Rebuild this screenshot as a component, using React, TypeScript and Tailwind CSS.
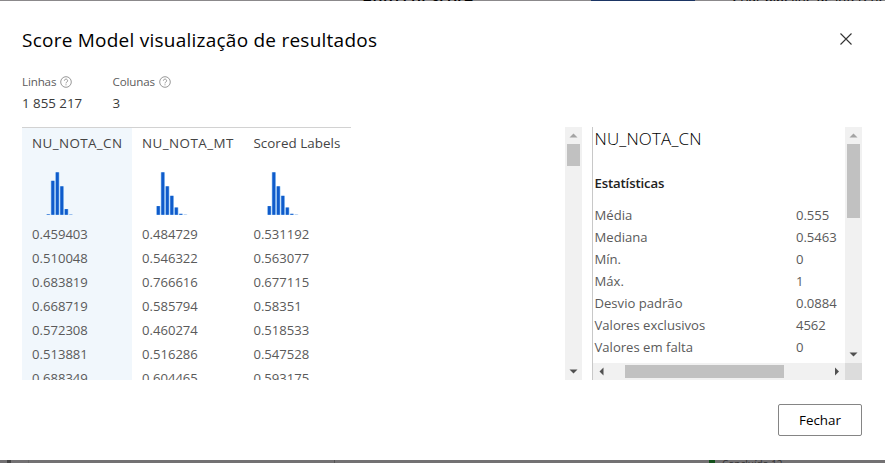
import React from "react";

type Bar = { x: number; h: number };

const columns: { name: string; width: string; tracking: string; active: boolean; bars: Bar[]; values: string[] }[] = [
  {
    name: "NU_NOTA_CN",
    width: "w-[110px]",
    tracking: "tracking-[0.4px]",
    active: true,
    bars: [
      { x: 14.2, h: 0.6 },
      { x: 18.7, h: 34 },
      { x: 23.2, h: 42.5 },
      { x: 27.7, h: 28.5 },
      { x: 32.2, h: 5.7 },
      { x: 36.7, h: 0.3 },
    ],
    values: ["0.459403", "0.510048", "0.683819", "0.668719", "0.572308", "0.513881", "0.688349"],
  },
  {
    name: "NU_NOTA_MT",
    width: "w-[111.4px]",
    tracking: "tracking-[0.45px]",
    active: false,
    bars: [
      { x: 14.2, h: 8.7 },
      { x: 18.7, h: 42.5 },
      { x: 23.2, h: 28.5 },
      { x: 27.7, h: 19 },
      { x: 32.2, h: 7.3 },
      { x: 36.7, h: 1 },
      { x: 41.2, h: 0.2 },
    ],
    values: ["0.484729", "0.546322", "0.766616", "0.585794", "0.460274", "0.516286", "0.604465"],
  },
  {
    name: "Scored Labels",
    width: "w-[107.6px]",
    tracking: "tracking-[0.05px]",
    active: false,
    bars: [
      { x: 14.2, h: 8.7 },
      { x: 18.7, h: 42.5 },
      { x: 23.2, h: 28.5 },
      { x: 27.7, h: 19 },
      { x: 32.2, h: 7.3 },
      { x: 36.7, h: 1 },
      { x: 41.2, h: 0.2 },
    ],
    values: ["0.531192", "0.563077", "0.677115", "0.58351", "0.518533", "0.547528", "0.593175"],
  },
];

const stats = [
  ["Média", "0.555"],
  ["Mediana", "0.5463"],
  ["Mín.", "0"],
  ["Máx.", "1"],
  ["Desvio padrão", "0.0884"],
  ["Valores exclusivos", "4562"],
  ["Valores em falta", "0"],
];

function Histogram({ bars }: { bars: Bar[] }) {
  return (
    <svg width="60" height="44" viewBox="0 0 60 44" className="block">
      {bars.map((b) => (
        <g key={b.x}>
          <rect x={b.x} y={43.8 - b.h} width="4.3" height={b.h} fill="#a9d3f7" />
          <rect x={b.x + 0.6} y={43.8 - b.h} width="3" height={b.h} fill="#0f5bcb" />
        </g>
      ))}
    </svg>
  );
}

function Help() {
  return (
    <svg width="12" height="12" viewBox="0 0 12 12" fill="none" stroke="#858585" strokeWidth="0.85">
      <circle cx="6" cy="6" r="5.3" />
      <path d="M4.4 4.7a1.6 1.6 0 1 1 2.5 1.3C6.2 6.4 6 6.7 6 7.4M6 8.3v1" />
    </svg>
  );
}

function Arrow({ dir, light }: { dir: "up" | "down" | "left" | "right"; light?: boolean }) {
  const paths = {
    up: "M4.5 10.5h8L8.5 6.5z",
    down: "M4.5 6.5h8L8.5 10.5z",
    left: "M10.5 4.5v8L6.5 8.5z",
    right: "M7 4.5v8L11 8.5z",
  };
  return (
    <svg width="17" height="17" viewBox="0 0 17 17" className="shrink-0">
      <path d={paths[dir]} fill={light ? "#a3a3a3" : "#505050"} />
    </svg>
  );
}

function Fact({ label, value, width }: { label: string; value: string; width: string }) {
  return (
    <div className={width}>
      <div className="flex h-4 items-center gap-1 text-[11.6px] tracking-[-0.15px] text-[#5c5c5c]">
        <span>{label}</span>
        <Help />
      </div>
      <div className="mt-[3px] h-5 text-[13.3px] leading-5 text-[#3a3a3a]">{value}</div>
    </div>
  );
}

export default function App() {
  return (
    <div className="flex h-[463px] w-[885px] flex-col overflow-hidden bg-white font-['Open_Sans','Noto_Sans',sans-serif]">
      <div className="flex h-px shrink-0 items-end overflow-hidden bg-[#8b898b] text-[13px] leading-none text-black">
        <span className="ml-[362px] h-[10px] w-[229px] shrink-0 text-[16px] font-semibold">Auto cut score</span>
        <span className="h-px w-[104px] shrink-0 bg-[#1b3564]" />
        <span className="ml-[37px] h-[10px] shrink-0 whitespace-nowrap">Criar pipeline de inferência</span>
      </div>

      <main className="flex h-[459px] shrink-0 flex-col pl-[22px] pr-[23px]">
        <header className="flex h-[73px] items-start justify-between pt-[25px]">
          <h1 className="text-[19px] font-medium leading-[28px] tracking-[0.24px] text-black">Score Model visualização de resultados</h1>
          <svg width="12" height="12" viewBox="0 0 12 12" className="mr-[10px] mt-[7px]" stroke="#333" strokeWidth="1.1">
            <path d="M.5.5l11 11M11.5.5l-11 11" />
          </svg>
        </header>

        <section className="flex h-[53px]">
          <Fact label="Linhas" value="1 855 217" width="w-[90.5px]" />
          <Fact label="Colunas" value="3" width="w-[90px]" />
        </section>

        <section className="flex h-[253px]">
          <div className="flex h-full flex-1 items-start overflow-hidden">
            {columns.map((c) => (
              <div
                key={c.name}
                className={`${c.width} h-[270px] shrink-0 whitespace-nowrap border-t border-[#d2d2d2] pl-[10px] ${c.active ? "bg-[#f1f7fc]" : ""}`}
              >
                <div className={`h-[43px] pt-[5px] text-[13.4px] font-medium leading-[20px] text-[#444] ${c.tracking}`}>{c.name}</div>
                <Histogram bars={c.bars} />
                <div className="pt-[7px] text-[13.1px] leading-6 text-[#5a5a5a]">
                  {c.values.map((v) => (
                    <div key={v}>{v}</div>
                  ))}
                </div>
              </div>
            ))}
          </div>

          <div className="flex w-[17px] flex-col items-center bg-[#f1f1f1]">
            <Arrow dir="up" light />
            <div className="h-[22px] w-[13px] bg-[#c1c1c1]" />
            <div className="flex-1" />
            <Arrow dir="down" />
          </div>

          <div className="ml-[10px] flex w-[270px] flex-col border-l border-[#c8c8c8]">
            <div className="flex h-[236px]">
              <div className="w-[252px] pl-[1.5px] text-[#5a5a5a]">
                <h2 className="h-[45px] text-[17px] font-light leading-[24px] tracking-[0.15px] text-black">NU_NOTA_CN</h2>
                <h3 className="h-[32px] text-[13.2px] font-semibold leading-[22px] tracking-[-0.15px] text-[#222]">Estatísticas</h3>
                {stats.map(([label, value]) => (
                  <div key={label} className="flex h-[22px] text-[13.1px] leading-[22px]">
                    <span className="w-[201.5px]">{label}</span>
                    <span className="tracking-[-0.05px]">{value}</span>
                  </div>
                ))}
              </div>
              <div className="flex w-[17px] flex-col items-center bg-[#f1f1f1]">
                <Arrow dir="up" light />
                <div className="h-[74px] w-[13px] bg-[#c1c1c1]" />
                <div className="flex-1" />
                <Arrow dir="down" />
              </div>
            </div>
            <div className="flex h-[17px]">
              <div className="flex w-[252px] items-center bg-[#f1f1f1]">
                <Arrow dir="left" />
                <div className="ml-[15px] h-[13px] w-[159px] bg-[#c1c1c1]" />
                <div className="flex-1" />
                <Arrow dir="right" />
              </div>
              <div className="w-[17px] bg-[#dcdcdc]" />
            </div>
          </div>
        </section>

        <footer className="flex justify-end pt-[24px]">
          <button className="h-8 w-[84px] rounded-[2px] border border-[#858585] text-[13.4px] leading-[30px] text-black">Fechar</button>
        </footer>
      </main>

      <div className="flex h-[3px] shrink-0 items-start overflow-hidden bg-[#737173] text-[10px] leading-none text-[#333]">
        <span className="ml-[7px] h-[3px] w-1 bg-[#444]" />
        <span className="ml-[17px] h-[3px] w-px bg-[#666]" />
        <span className="ml-[305px] h-[3px] w-px bg-[#555]" />
        <span className="ml-[374px] h-[3px] w-[6px] bg-[#12501a]" />
        <span className="-mt-px ml-[7px] whitespace-nowrap">Concluído 12</span>
      </div>
    </div>
  );
}
